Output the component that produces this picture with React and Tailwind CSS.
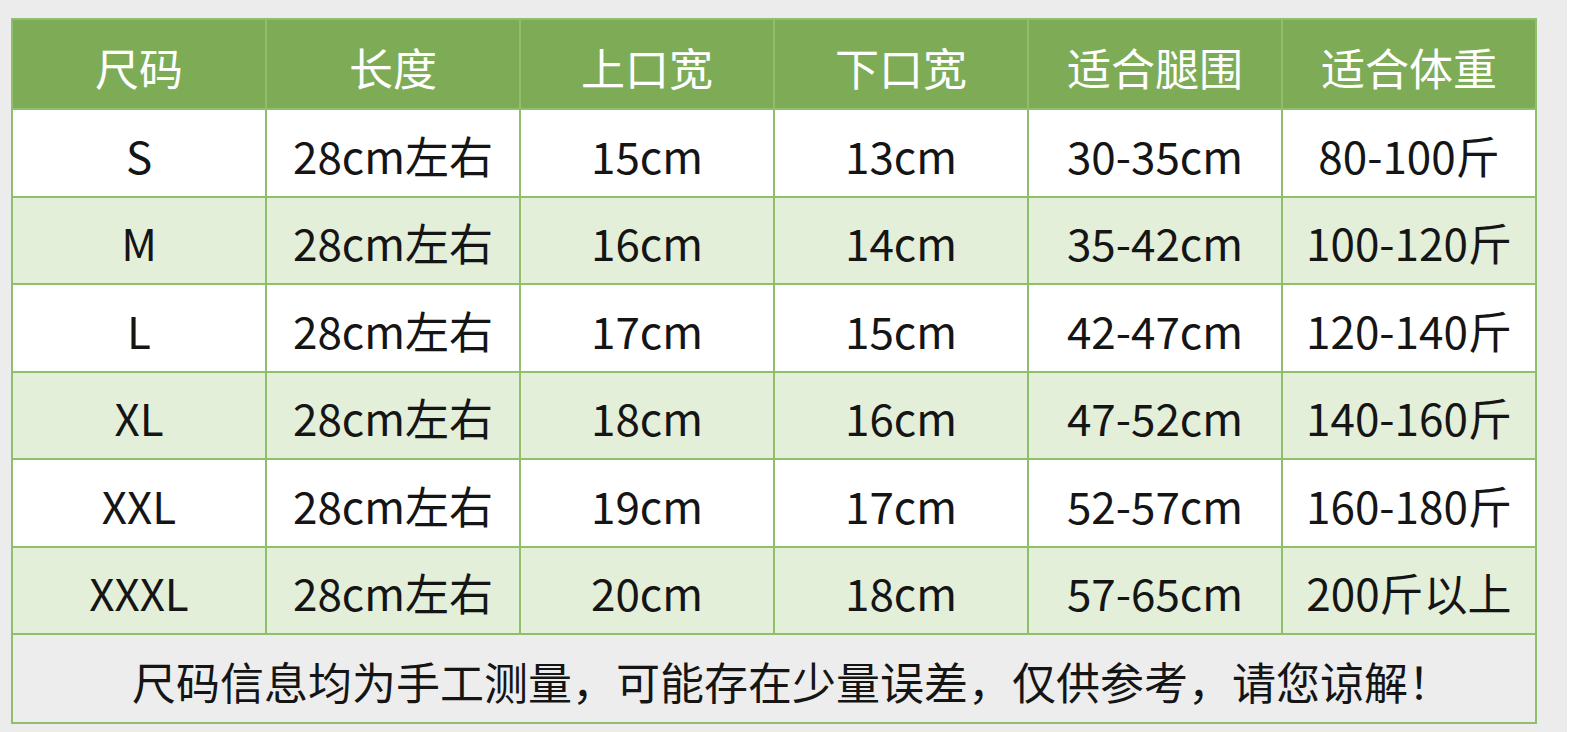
import React from "react";

const header = ["尺码", "长度", "上口宽", "下口宽", "适合腿围", "适合体重"];
const rows = [
  ["S", "28cm左右", "15cm", "13cm", "30-35cm", "80-100斤"],
  ["M", "28cm左右", "16cm", "14cm", "35-42cm", "100-120斤"],
  ["L", "28cm左右", "17cm", "15cm", "42-47cm", "120-140斤"],
  ["XL", "28cm左右", "18cm", "16cm", "47-52cm", "140-160斤"],
  ["XXL", "28cm左右", "19cm", "17cm", "52-57cm", "160-180斤"],
  ["XXXL", "28cm左右", "20cm", "18cm", "57-65cm", "200斤以上"],
];

export default function App() {
  return (
    <div
      className="w-[1590px] h-[732px] bg-white flex overflow-hidden"
      style={{ fontFamily: '"Noto Sans CJK SC", "Noto Sans", sans-serif' }}
    >
      <div className="w-[1567px] h-full bg-[#ececec] pt-[18px] pl-[11px]">
        <table className="w-[1526px] border-collapse table-fixed">
          <thead>
            <tr className="h-[90px] bg-[#7eac56]">
              {header.map((h, i) => (
                <th
                  key={i}
                  className="border-2 border-[#8fbe6c] text-white font-normal text-[44px] leading-none pt-[6px]"
                >
                  {h}
                </th>
              ))}
            </tr>
          </thead>
          <tbody>
            {rows.map((r, ri) => (
              <tr
                key={ri}
                className={ri % 2 === 0 ? "h-[87.5px] bg-white" : "h-[87.5px] bg-[#e3efd9]"}
              >
                {r.map((c, ci) => (
                  <td
                    key={ci}
                    className="border-2 border-[#8fbe6c] text-center text-[#151515] text-[44px] leading-none pt-[4px]"
                  >
                    {c}
                  </td>
                ))}
              </tr>
            ))}
            <tr className="h-[89px] bg-[#ededed]">
              <td
                colSpan={6}
                className="border-2 border-[#8fbe6c] text-center text-[#151515] text-[44px] leading-none pt-[4px] pl-[36px]"
              >
                尺码信息均为手工测量，可能存在少量误差，仅供参考，请您谅解！
              </td>
            </tr>
          </tbody>
        </table>
      </div>
    </div>
  );
}
